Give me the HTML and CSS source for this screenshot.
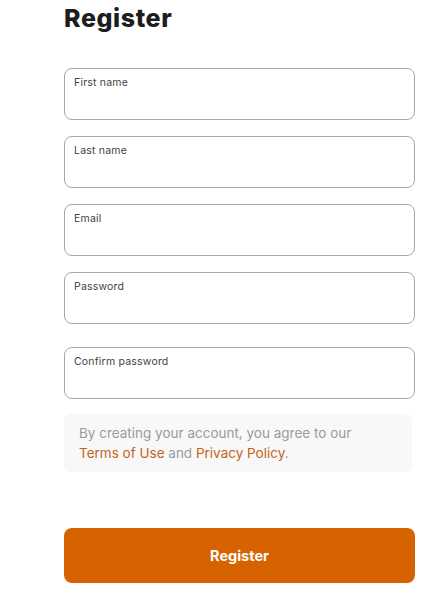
FILE: index.html
```html
<!DOCTYPE html>
<html lang="en">
<head>
<meta charset="utf-8">
<title>Register</title>
<link rel="stylesheet" href="styles.css">
</head>
<body>
<main class="page">
  <h1 class="title">Register</h1>
  <form class="form">
    <div class="fields">
      <label class="field"><span class="field-label">First name</span><input class="field-input" type="text"></label>
      <label class="field"><span class="field-label">Last name</span><input class="field-input" type="text"></label>
      <label class="field"><span class="field-label">Email</span><input class="field-input" type="email"></label>
      <label class="field"><span class="field-label">Password</span><input class="field-input" type="password"></label>
      <label class="field field-confirm"><span class="field-label">Confirm password</span><input class="field-input" type="password"></label>
    </div>
    <p class="terms">By creating your account, you agree to our<br><a class="link" href="#">Terms of Use</a> and <a class="link" href="#">Privacy Policy</a>.</p>
    <button class="submit" type="button">Register</button>
  </form>
</main>
</body>
</html>
```
FILE: styles.css
```css
* { box-sizing: border-box; }
html, body { margin: 0; padding: 0; background: #fff; }
body { font-family: "Inter", "Noto Sans", sans-serif; color: #222; }
.page { padding: 3px 0 0 64px; width: 415px; }
.title { margin: 0; font-size: 25px; line-height: 30px; font-weight: 800; color: #1d1d1d; letter-spacing: 0.6px; }
.form { margin-top: 35px; display: flex; flex-direction: column; }
.fields { display: flex; flex-direction: column; gap: 16px; }
.field { display: flex; flex-direction: column; height: 52px; border: 1px solid #a8a8a8; border-radius: 8px; padding: 6px 9px 0; }
.field-confirm { margin-top: 7px; }
.field-label { font-size: 10.5px; line-height: 15px; color: #3f3f3f; letter-spacing: 0.2px; }
.field-input { border: 0; outline: 0; background: transparent; padding: 0; font: inherit; font-size: 13px; height: 22px; }
.terms { margin: 15px 0 0; width: 348px; background: #f8f8f8; border-radius: 6px; padding: 9px 15px; font-size: 13.5px; line-height: 20px; color: #9b9b9b; white-space: nowrap; }
.link { color: #c4641c; text-decoration: none; }
.submit { margin-top: 56px; height: 55px; border: 0; border-radius: 8px; background: #d76200; color: #fff; font-family: inherit; font-size: 14.5px; font-weight: 700; }
```
